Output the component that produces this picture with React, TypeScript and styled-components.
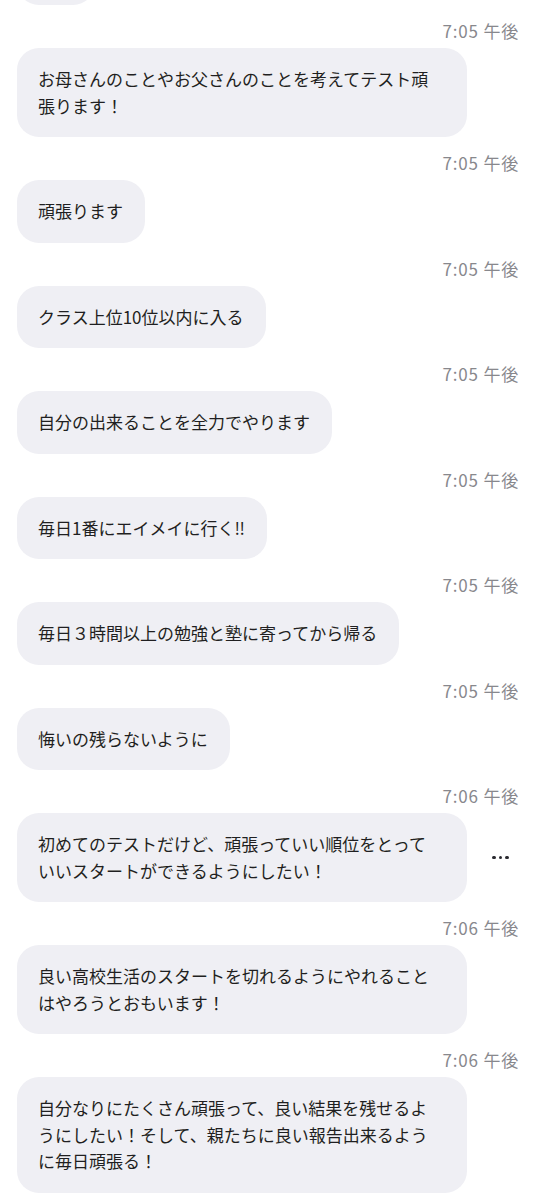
import styled, {createGlobalStyle} from "styled-components";

const GlobalStyle = createGlobalStyle`
  html, body {
    margin: 0;
    padding: 0;
    background: #ffffff;
  }
  body {
    font-family: "Noto Sans CJK JP", "Noto Sans", sans-serif;
    overflow: hidden;
  }
`;

type Message = {
    time?: string;
    text: string[];
    more?: boolean;
};

const messages: Message[] = [
    {text: ['\u00a0\u00a0']},
    {time: '7:05 午後', text: ['お母さんのことやお父さんのことを考えてテスト頑', '張ります！']},
    {time: '7:05 午後', text: ['頑張ります']},
    {time: '7:05 午後', text: ['クラス上位10位以内に入る']},
    {time: '7:05 午後', text: ['自分の出来ることを全力でやります']},
    {time: '7:05 午後', text: ['毎日1番にエイメイに行く‼']},
    {time: '7:05 午後', text: ['毎日３時間以上の勉強と塾に寄ってから帰る']},
    {time: '7:05 午後', text: ['悔いの残らないように']},
    {time: '7:06 午後', text: ['初めてのテストだけど、頑張っていい順位をとって', 'いいスタートができるようにしたい！'], more: true},
    {time: '7:06 午後', text: ['良い高校生活のスタートを切れるようにやれること', 'はやろうとおもいます！']},
    {time: '7:06 午後', text: ['自分なりにたくさん頑張って、良い結果を残せるよ', 'うにしたい！そして、親たちに良い報告出来るよう', 'に毎日頑張る！']},
];

const Thread = styled.div`
  display: flex;
  flex-direction: column;
  margin-top: -57.5px;
  padding: 0 17px;
`;

const Entry = styled.div`
  display: flex;
  flex-direction: column;
`;

const TimeStamp = styled.div`
  align-self: flex-end;
  margin: 16px 1px 7px 0;
  height: 20px;
  line-height: 20px;
  font-family: "Noto Sans CJK JP", "Noto Sans", sans-serif;
  font-size: 17px;
  color: #88888d;
  letter-spacing: 0.8px;
`;

const Row = styled.div`
  display: flex;
  align-items: center;
`;

const Bubble = styled.div<{ $wide?: boolean; $stub?: boolean }>`
  box-sizing: border-box;
  width: ${p => (p.$wide ? '450px' : 'auto')};
  min-width: ${p => (p.$stub ? '78px' : '0')};
  padding: 18px 22px 18px 21px;
  border-radius: 22px;
  background: #efeff4;
  color: #1f1f21;
  font-size: 17px;
  line-height: 26.5px;
`;

const Line = styled.div`
  white-space: nowrap;
`;

const More = styled.div`
  display: flex;
  gap: 3px;
  margin-left: 25px;
`;

const Dot = styled.span`
  width: 3.5px;
  height: 3.5px;
  border-radius: 50%;
  background: #2a2a30;
`;

export default function App() {
    return (
        <>
            <GlobalStyle/>
            <Thread>
                {messages.map((m, i) => (
                    <Entry key={i}>
                        {m.time && <TimeStamp>{m.time}</TimeStamp>}
                        <Row>
                            <Bubble $wide={m.text.length > 1} $stub={!m.time}>
                                {m.text.map((t, j) => <Line key={j}>{t}</Line>)}
                            </Bubble>
                            {m.more && <More><Dot/><Dot/><Dot/></More>}
                        </Row>
                    </Entry>
                ))}
            </Thread>
        </>
    );
}
